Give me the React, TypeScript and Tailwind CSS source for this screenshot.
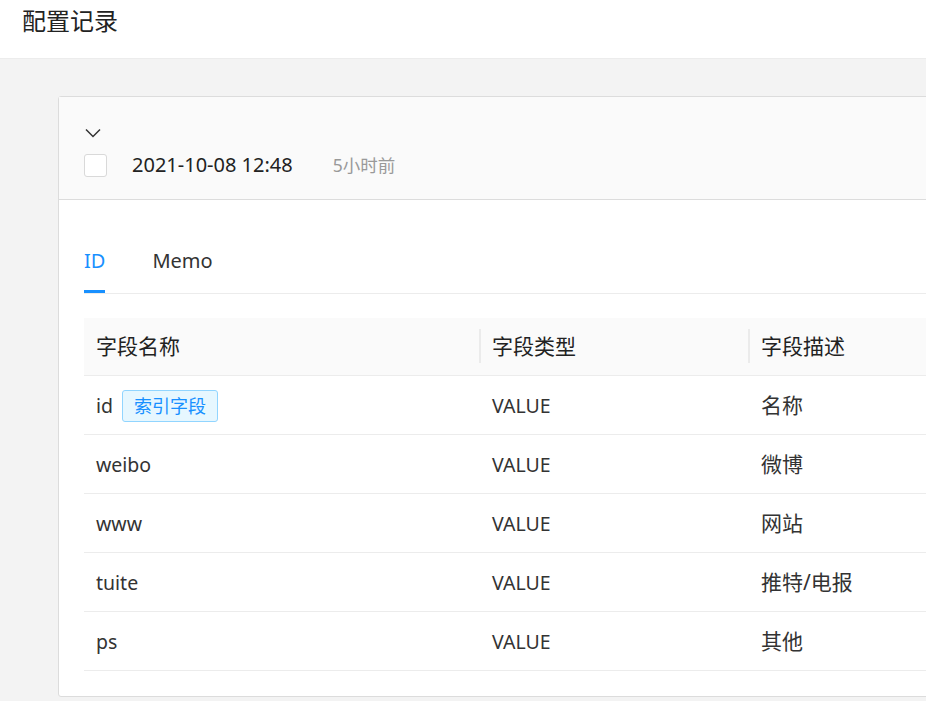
const rows = [
    { name: "id", index: true, type: "VALUE", desc: "名称" },
    { name: "weibo", index: false, type: "VALUE", desc: "微博" },
    { name: "www", index: false, type: "VALUE", desc: "网站" },
    { name: "tuite", index: false, type: "VALUE", desc: "推特/电报" },
    { name: "ps", index: false, type: "VALUE", desc: "其他" },
];

const font = "font-['Noto_Sans','Noto_Sans_CJK_SC',sans-serif]";

const App = () => {
    return (
        <div
            className={`h-[701px] w-[926px] overflow-hidden bg-[#f3f3f3] text-[#333] ${font}`}
        >
            <div className="flex h-[59px] items-start border-b border-[#ececec] bg-white px-[22px] pt-[5px]">
                <h1 className="text-[24px] leading-[32px] text-[#222]">
                    配置记录
                </h1>
            </div>

            <div className="pt-[37px] pl-[58px]">
                <div className="w-[1100px] rounded-[3px] border border-[#dcdcdc] bg-white">
                    <div className="border-b border-[#dcdcdc] bg-[#fafafa] px-[25px] pt-[31px] pb-[22px]">
                        <svg
                            width="16"
                            height="10"
                            viewBox="0 0 16 10"
                            fill="none"
                            stroke="#333"
                            strokeWidth="1.5"
                            className="ml-[1px]"
                        >
                            <path d="M1 1.5 L8 8.5 L15 1.5" />
                        </svg>
                        <div className="mt-[15px] flex items-center">
                            <span className="h-[23px] w-[23px] rounded-[3px] border border-[#d9d9d9] bg-white" />
                            <span className="ml-[25px] text-[20px] leading-[24px] text-[#222]">
                                2021-10-08 12:48
                            </span>
                            <span className="ml-[40px] text-[17.5px] leading-[24px] text-[#999]">
                                5小时前
                            </span>
                        </div>
                    </div>

                    <div className="px-[25px] pt-[44px] pb-[25px]">
                        <div className="flex gap-[47px] border-b border-[#ececec] text-[20px]">
                            <div className="border-b-[3px] border-[#1890ff] pb-[12px] leading-[34px] text-[#1890ff]">
                                ID
                            </div>
                            <div className="pb-[12px] leading-[34px] text-[#333]">
                                Memo
                            </div>
                        </div>

                        <table className="mt-[24px] w-[1048px] border-collapse text-[19.5px]">
                            <thead>
                                <tr className="h-[57px] border-b border-[#ececec] bg-[#fafafa] text-left text-[21px]">
                                    <th className="w-[396px] px-[12px] font-normal text-[#222]">
                                        字段名称
                                    </th>
                                    <th className="relative w-[269px] px-[12px] font-normal text-[#222]">
                                        <span className="absolute top-[11px] -left-px h-[34px] w-[2px] bg-[#ebebeb]" />
                                        字段类型
                                    </th>
                                    <th className="relative px-[12px] font-normal text-[#222]">
                                        <span className="absolute top-[11px] -left-px h-[34px] w-[2px] bg-[#ebebeb]" />
                                        字段描述
                                    </th>
                                </tr>
                            </thead>
                            <tbody>
                                {rows.map((r) => (
                                    <tr
                                        key={r.name}
                                        className="h-[59px] border-b border-[#ececec]"
                                    >
                                        <td className="px-[12px] pt-[2px]">
                                            <div className="flex items-center">
                                                <span>{r.name}</span>
                                                {r.index && (
                                                    <span className="ml-[9px] rounded-[3px] border border-[#91d5ff] bg-[#e6f7ff] px-[11px] text-[18px] leading-[30px] text-[#1890ff]">
                                                        索引字段
                                                    </span>
                                                )}
                                            </div>
                                        </td>
                                        <td className="px-[12px] pt-[2px]">
                                            {r.type}
                                        </td>
                                        <td className="px-[12px] pt-[2px] text-[21px]">
                                            {r.desc}
                                        </td>
                                    </tr>
                                ))}
                            </tbody>
                        </table>
                    </div>
                </div>
            </div>
        </div>
    );
};

export default App;
